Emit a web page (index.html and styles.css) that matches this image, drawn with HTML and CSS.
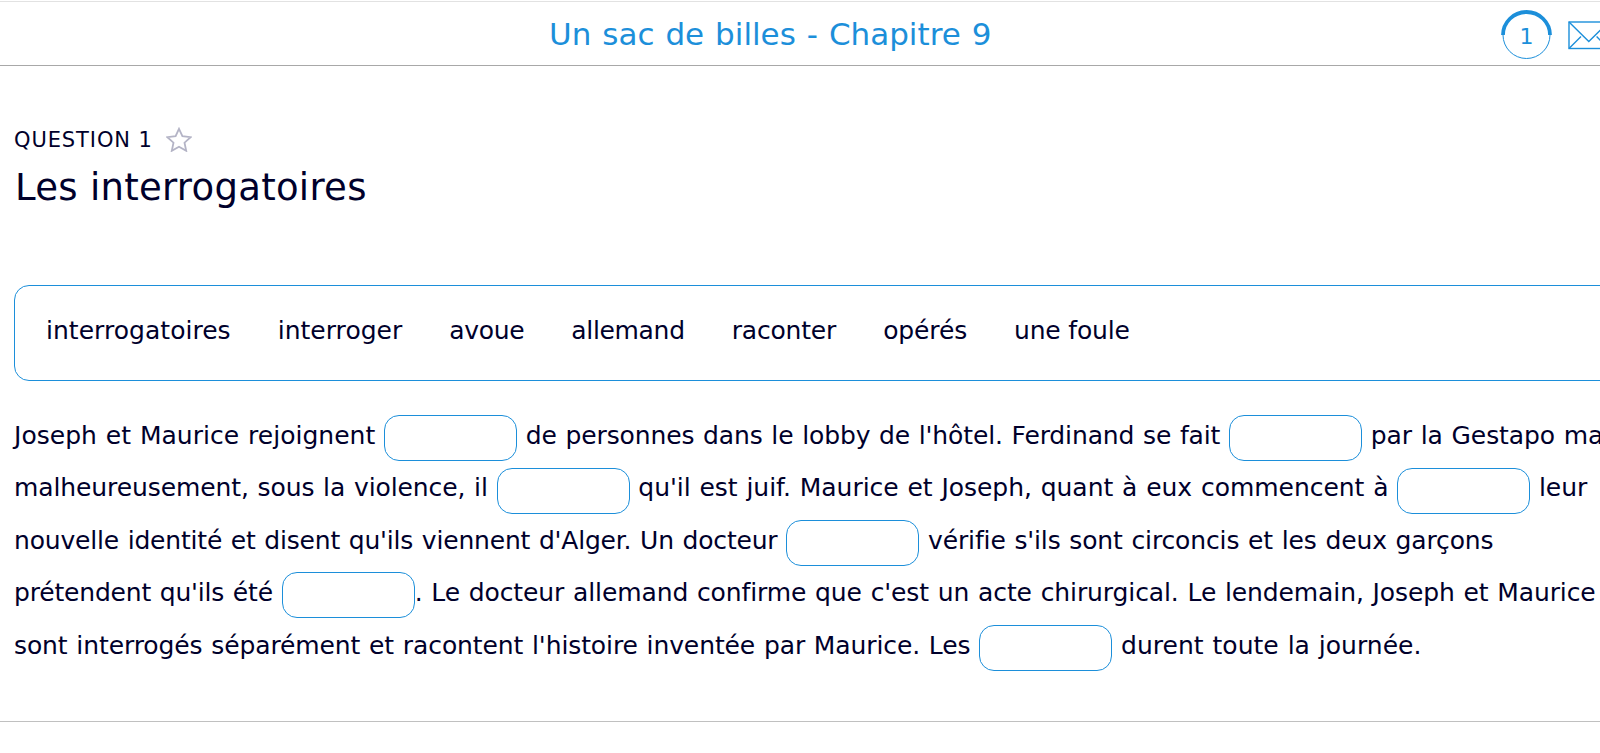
FILE: index.html
```html
<!DOCTYPE html>
<html lang="fr">

<head>
    <meta charset="UTF-8">
    <meta name="viewport" content="width=device-width, initial-scale=1.0">
    <title>Un sac de billes - Chapitre 9</title>
    <link rel="stylesheet" href="styles.css">
</head>

<body>
    <header class="top-bar">
        <h1 class="quiz-title">Un sac de billes - Chapitre 9</h1>
        <div class="tools">
            <div class="progress">
                <svg width="51" height="50" viewBox="0 0 51 50">
                    <circle cx="25.5" cy="25" r="23.5" fill="none" stroke="#1c8fda" stroke-width="1"/>
                    <path d="M2 25a23.5 23 0 0 1 47 0" fill="none" stroke="#1c8fda" stroke-width="3.8"/>
                </svg>
                <span class="progress-number">1</span>
            </div>
            <svg class="mail" width="42" height="29" viewBox="0 0 42 29" fill="none" stroke="#1c8fda" stroke-width="1.4">
                <rect x="1" y="1" width="39.6" height="26.5"/>
                <path d="M1 1l19.8 19.5L40.6 1M1 27.5l12-12M40.6 27.5l-12-12"/>
            </svg>
        </div>
    </header>

    <main class="question">
        <div class="question-label">
            <span>QUESTION 1</span>
            <svg class="star" width="26" height="25" viewBox="0 0 26 25">
                <path d="M13 1.8l3.4 7.4 8.2 1-6.1 5.5 1.7 8.1L13 19.8l-7.2 4 1.7-8.1-6.1-5.5 8.2-1z" fill="none" stroke="#b4b4c6" stroke-width="1.8"/>
            </svg>
        </div>
        <h2 class="question-title">Les interrogatoires</h2>

        <div class="word-bank">
            <span>interrogatoires</span>
            <span>interroger</span>
            <span class="narrow">avoue</span>
            <span class="narrow">allemand</span>
            <span class="snug">raconter</span>
            <span class="tight">opérés</span>
            <span class="snug">une foule</span>
        </div>

        <p class="cloze">
            <span class="normal">Joseph et Maurice rejoignent</span> <span class="blank"></span> <span class="tight">de personnes dans le lobby de l'hôtel. Ferdinand se fait</span> <span class="blank"></span> <span>par la Gestapo ma</span><br>
            <span>malheureusement, sous la violence, il</span> <span class="blank"></span> <span class="loose">qu'il est juif. Maurice et Joseph, quant à eux commencent à</span> <span class="blank"></span> <span>leur</span><br>
            <span class="snug">nouvelle identité et disent qu'ils viennent d'Alger. Un docteur</span> <span class="blank"></span> <span class="tight">vérifie s'ils sont circoncis et les deux garçons</span><br>
            <span class="snug">prétendent qu'ils été</span> <span class="blank"></span><span>. Le docteur allemand confirme que c'est un acte chirurgical. Le lendemain, Joseph et Maurice</span><br>
            <span>sont interrogés séparément et racontent l'histoire inventée par Maurice. Les</span> <span class="blank"></span> <span class="normal">durent toute la journée.</span>
        </p>
    </main>
</body>

</html>
```

FILE: styles.css
```css
* {
    box-sizing: border-box;
}

body {
    margin: 0;
    background-color: #fff;
    color: #00002b;
    font-family: Verdana, 'DejaVu Sans', sans-serif;
    font-variant-ligatures: none;
    overflow: hidden;
}

.top-bar {
    position: relative;
    display: flex;
    align-items: center;
    height: 65px;
    border-top: 1px solid #e2e2e2;
    border-bottom: 1px solid #a8a8a8;
    margin-top: 1px;
}

.quiz-title {
    margin: 0 0 0 549px;
    font-size: 31px;
    font-weight: 400;
    word-spacing: 0.035em;
    color: #1c8fda;
    white-space: nowrap;
}

.tools {
    display: flex;
    align-items: center;
    gap: 16px;
    position: absolute;
    left: 1501px;
    top: 8px;
}

.progress {
    position: relative;
    width: 51px;
    height: 50px;
}

.progress-number {
    position: absolute;
    left: 0;
    top: 0;
    width: 51px;
    line-height: 53px;
    text-align: center;
    font-size: 22px;
    color: #1c8fda;
}

.question {
    height: 656px;
    padding: 60px 0 0 14px;
    border-bottom: 1px solid #c0c0c0;
}

.question-label {
    display: flex;
    align-items: center;
    gap: 13px;
    height: 28px;
    font-size: 21px;
    letter-spacing: 0.9px;
}

.star {
    margin-bottom: 2px;
}

.question-title {
    margin: 9px 0 0 1px;
    font-size: 37px;
    font-weight: 400;
    line-height: 50px;
    letter-spacing: 0.28px;
}

.word-bank {
    display: flex;
    gap: 47px;
    width: 1620px;
    height: 96px;
    margin-top: 72px;
    padding: 30px 31px;
    border: 1px solid #1c8fda;
    border-radius: 15px;
    font-size: 25px;
    letter-spacing: 0.03px;
}

.cloze {
    margin: 29px 0 0;
    font-size: 25px;
    line-height: 52.4px;
    letter-spacing: -0.1px;
    word-spacing: 0.037em;
    white-space: nowrap;
}

.normal {
    letter-spacing: 0.02px;
}

.loose {
    letter-spacing: -0.035px;
}

.tight {
    letter-spacing: -0.13px;
}

.snug {
    letter-spacing: -0.185px;
}

.narrow {
    letter-spacing: -0.33px;
}

.blank {
    display: inline-block;
    width: 133px;
    height: 46px;
    border: 1px solid #1c8fda;
    border-radius: 15px;
    vertical-align: -17.2px;
}
```
